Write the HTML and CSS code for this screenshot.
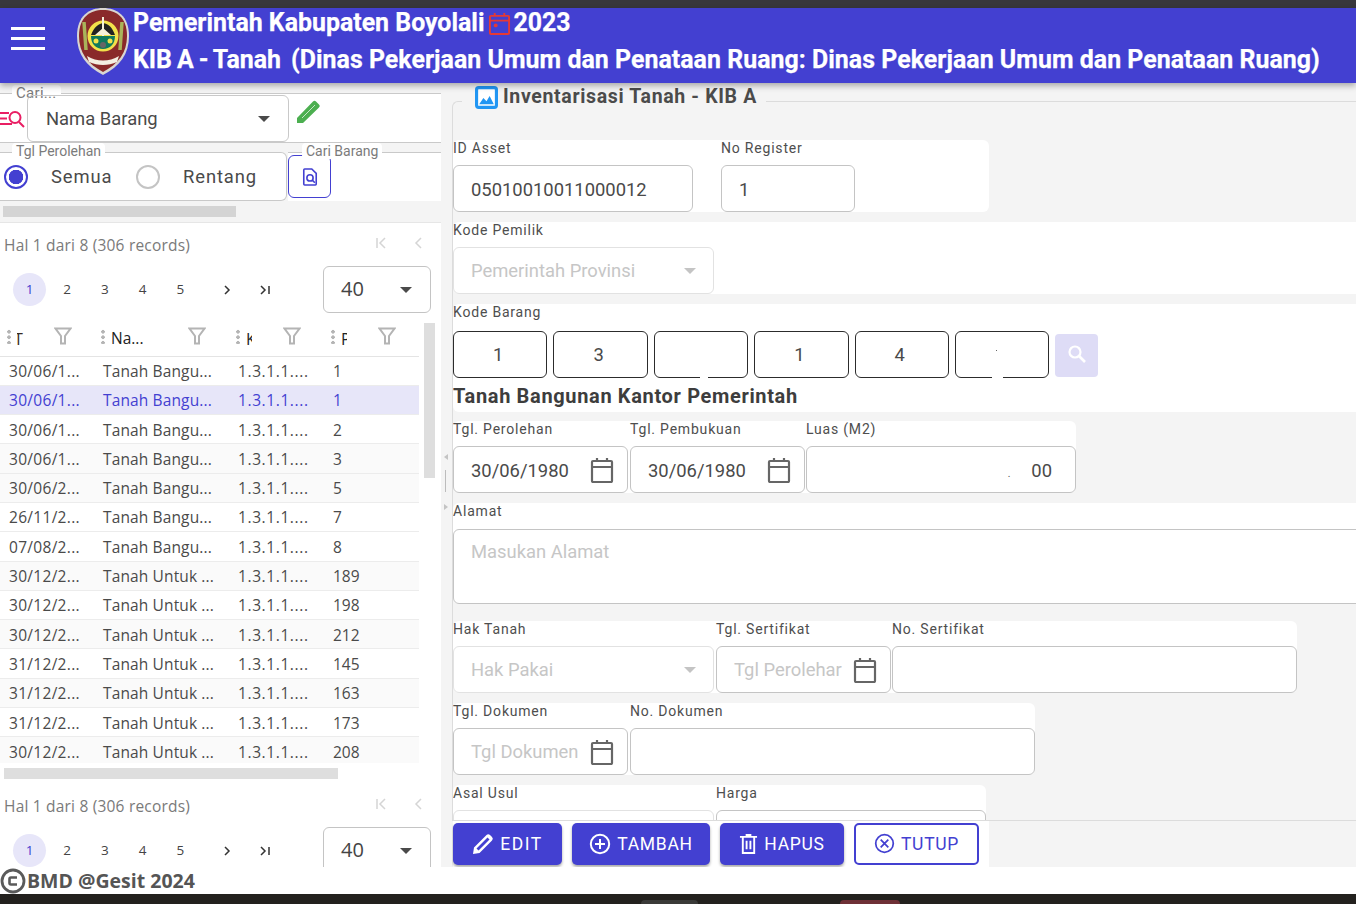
FILE: index.html
```html
<!DOCTYPE html>
<html lang="id">
<head>
<meta charset="utf-8">
<title>KIB A - Tanah</title>
<link rel="stylesheet" href="styles.css">
</head>
<body>
<svg class="defs" width="0" height="0" aria-hidden="true">
  <symbol id="cal" viewBox="0 0 24 26"><path d="M2 5a1 1 0 0 1 1-1h18a1 1 0 0 1 1 1v19a1 1 0 0 1-1 1H3a1 1 0 0 1-1-1zM2 10h20M7 1v3M17 1v3" fill="none" stroke="currentColor" stroke-width="2.200"/></symbol>
  <symbol id="funnel" viewBox="0 0 18 18"><path d="M1.500 1.500h15L11 9v7.500H7V9z" fill="none" stroke="currentColor" stroke-width="2"/></symbol>
</svg>
<div class="topstrip"></div>
<header class="appbar">
  <button class="burger" aria-label="menu"><span></span><span></span><span></span></button>
  <svg class="logo" viewBox="0 0 52 67">
    <path d="M26 0C40 0 52 8 52 28c0 18-9 30-26 39C9 58 0 46 0 28 0 8 12 0 26 0z" fill="#d9d6d2"/>
    <path d="M26 2C39 2 50 9 50 28c0 17-9 28-24 36C11 56 2 45 2 28 2 9 13 2 26 2z" fill="#8a2a2a"/>
    <circle cx="26" cy="29" r="19" fill="#8a2a2a"/>
    <circle cx="26" cy="28" r="15.500" fill="#f2e14a"/>
    <path d="M14 27c3-8 7-11 12-12 6 1 9 4 12 12z" fill="#222"/>
    <path d="M25 9h2v20h-2zM18 27l8-7 8 7z" fill="#f5f1da"/>
    <path d="M14 28h24c0 8-5 13-12 13s-12-5-12-13z" fill="#0f7a5c"/>
    <circle cx="19" cy="33" r="2.500" fill="#f2e14a"/><circle cx="33" cy="33" r="2.500" fill="#f2e14a"/><circle cx="26" cy="37" r="3" fill="#666"/>
    <path d="M10 48c10 6 22 6 32 0l-2 6c-9 4-19 4-28 0z" fill="#f4efe2"/>
    <path d="M7 14l2 28M45 14l-2 28" stroke="#a9b45a" stroke-width="3.500" fill="none"/>
  </svg>
  <div class="appbar-titles">
    <div class="title-line first">Pemerintah Kabupaten Boyolali
      <svg class="cal-red" viewBox="0 0 24 24"><path d="M2 5a1 1 0 0 1 1-1h18a1 1 0 0 1 1 1v17a1 1 0 0 1-1 1H3a1 1 0 0 1-1-1zM2 9h20M7 1v4M17 1v4" fill="none" stroke="#e53935" stroke-width="2"/><circle cx="8" cy="14" r="2" fill="#e53935"/></svg>
      2023</div>
    <div class="title-line second"><span class="title-kib">KIB A - Tanah&nbsp; </span><span class="title-rest">(Dinas Pekerjaan Umum dan Penataan Ruang: Dinas Pekerjaan Umum dan Penataan Ruang)</span></div>
  </div>
</header>

<main class="workspace">
  <aside class="left">
    <div class="left-top">
      <section class="search-row">
        <span class="float-label cari">Cari...</span>
        <svg class="search-ico" viewBox="0 0 25 20"><path d="M0 5h9M0 10.500h7M0 16h12M19 14l5 5" fill="none" stroke="#e91e63" stroke-width="2"/><circle cx="15" cy="9.500" r="5.500" fill="none" stroke="#e91e63" stroke-width="2"/></svg>
        <div class="pick">Nama Barang<i class="caret"></i></div>
        <svg class="pencil" viewBox="0 0 26 26"><path d="M1 20 17 3.500a2 2 0 0 1 3 0l3 3a2 2 0 0 1 0 3L7 25H1z" fill="#4caf50"/><path d="M6 20 19 7" stroke="#c8e6c9" stroke-width="1"/></svg>
      </section>
      <div class="filter-row">
        <section class="date-filter">
          <span class="float-label tgl">Tgl Perolehan</span>
          <span class="radio on"></span><span class="radio-text">Semua</span>
          <span class="radio"></span><span class="radio-text">Rentang</span>
        </section>
        <section class="find-box">
          <span class="float-label barang">Cari Barang</span>
          <button class="find-btn" aria-label="Cari Barang">
            <svg viewBox="0 0 18 20" width="16" height="18"><path d="M2 2a1 1 0 0 1 1-1h8l5 5v12a1 1 0 0 1-1 1H3a1 1 0 0 1-1-1z" fill="none" stroke="#4340d1" stroke-width="1.800"/><circle cx="9" cy="11" r="3.500" fill="none" stroke="#4340d1" stroke-width="1.800"/><path d="m11.500 13.500 3 3" stroke="#4340d1" stroke-width="1.800"/></svg>
          </button>
        </section>
      </div>
      <div class="hscroll top"><span></span></div>
    </div>

    <div class="grid-panel">
      <div class="pager">
        <div class="pager-info"><span>Hal 1 dari 8 (306 records)</span>
          <span class="pager-nav"><svg viewBox="0 0 12 12" width="12" height="12"><path d="M2 1v10M10 1 5 6l5 5" fill="none" stroke="#d5d5d5" stroke-width="1.500"/></svg><svg viewBox="0 0 12 12" width="12" height="12"><path d="M8 1 3 6l5 5" fill="none" stroke="#d5d5d5" stroke-width="1.500"/></svg></span></div>
        <div class="pager-links">
          <b class="page cur">1</b><b class="page">2</b><b class="page">3</b><b class="page">4</b><b class="page">5</b>
          <svg class="pg-next" viewBox="0 0 10 12" width="10" height="12"><path d="m3 2 4 4-4 4" fill="none" stroke="#333" stroke-width="1.500"/></svg>
          <svg class="pg-last" viewBox="0 0 12 12" width="12" height="12"><path d="m2 2 4 4-4 4M10 2v8" fill="none" stroke="#333" stroke-width="1.500"/></svg>
          <div class="size-pick">40<i class="caret"></i></div>
        </div>
      </div>
      <div class="table-wrap">
        <div class="thumb-v"></div>
        <table class="grid">
          <colgroup><col class="c1"><col class="c2"><col class="c3"><col class="c4"></colgroup>
          <thead><tr>
            <th><span class="th-in"><i class="dots"></i><span class="clip clip-t">T</span><svg class="funnel"><use href="#funnel"/></svg></span></th>
            <th><span class="th-in"><i class="dots"></i><span class="th-name">Na...</span><svg class="funnel far"><use href="#funnel"/></svg></span></th>
            <th><span class="th-in"><i class="dots"></i><span class="clip">K</span><svg class="funnel"><use href="#funnel"/></svg></span></th>
            <th><span class="th-in"><i class="dots"></i><span class="clip">P</span><svg class="funnel"><use href="#funnel"/></svg></span></th>
          </tr></thead>
          <tbody>
            <tr><td>30/06/1...</td><td>Tanah Bangu...</td><td>1.3.1.1....</td><td>1</td></tr>
            <tr class="sel"><td>30/06/1...</td><td>Tanah Bangu...</td><td>1.3.1.1....</td><td>1</td></tr>
            <tr><td>30/06/1...</td><td>Tanah Bangu...</td><td>1.3.1.1....</td><td>2</td></tr>
            <tr class="alt"><td>30/06/1...</td><td>Tanah Bangu...</td><td>1.3.1.1....</td><td>3</td></tr>
            <tr class="alt"><td>30/06/2...</td><td>Tanah Bangu...</td><td>1.3.1.1....</td><td>5</td></tr>
            <tr><td>26/11/2...</td><td>Tanah Bangu...</td><td>1.3.1.1....</td><td>7</td></tr>
            <tr><td>07/08/2...</td><td>Tanah Bangu...</td><td>1.3.1.1....</td><td>8</td></tr>
            <tr class="alt"><td>30/12/2...</td><td>Tanah Untuk ...</td><td>1.3.1.1....</td><td>189</td></tr>
            <tr><td>30/12/2...</td><td>Tanah Untuk ...</td><td>1.3.1.1....</td><td>198</td></tr>
            <tr class="alt"><td>30/12/2...</td><td>Tanah Untuk ...</td><td>1.3.1.1....</td><td>212</td></tr>
            <tr><td>31/12/2...</td><td>Tanah Untuk ...</td><td>1.3.1.1....</td><td>145</td></tr>
            <tr class="alt"><td>31/12/2...</td><td>Tanah Untuk ...</td><td>1.3.1.1....</td><td>163</td></tr>
            <tr><td>31/12/2...</td><td>Tanah Untuk ...</td><td>1.3.1.1....</td><td>173</td></tr>
            <tr class="alt"><td>30/12/2...</td><td>Tanah Untuk ...</td><td>1.3.1.1....</td><td>208</td></tr>
          </tbody>
        </table>
      </div>
      <div class="hscroll bottom"><span></span></div>
      <div class="pager pager-low">
        <div class="pager-info"><span>Hal 1 dari 8 (306 records)</span>
          <span class="pager-nav"><svg viewBox="0 0 12 12" width="12" height="12"><path d="M2 1v10M10 1 5 6l5 5" fill="none" stroke="#d5d5d5" stroke-width="1.500"/></svg><svg viewBox="0 0 12 12" width="12" height="12"><path d="M8 1 3 6l5 5" fill="none" stroke="#d5d5d5" stroke-width="1.500"/></svg></span></div>
        <div class="pager-links">
          <b class="page cur">1</b><b class="page">2</b><b class="page">3</b><b class="page">4</b><b class="page">5</b>
          <svg class="pg-next" viewBox="0 0 10 12" width="10" height="12"><path d="m3 2 4 4-4 4" fill="none" stroke="#333" stroke-width="1.500"/></svg>
          <svg class="pg-last" viewBox="0 0 12 12" width="12" height="12"><path d="m2 2 4 4-4 4M10 2v8" fill="none" stroke="#333" stroke-width="1.500"/></svg>
          <div class="size-pick">40<i class="caret"></i></div>
        </div>
      </div>
    </div>
  </aside>

  <div class="splitter">
    <i class="arrow-l"></i><i class="split-bar"></i><i class="arrow-r"></i>
  </div>

  <section class="right">
    <div class="form-frame">
      <h2 class="legend">
        <svg class="legend-ico" viewBox="0 0 22 22"><rect x="1.500" y="1.500" width="19" height="19" rx="2" fill="#fff" stroke="#2196f3" stroke-width="3"/><path d="M4 17.500l4-6 3 3 3-5 4 8z" fill="#2196f3"/></svg>
        Inventarisasi Tanah - KIB A</h2>

      <div class="band w536">
        <div class="field w268"><label>ID Asset</label><div class="box w240">05010010011000012</div></div>
        <div class="field w268"><label>No Register</label><div class="box w134">1</div></div>
      </div>

      <div class="band full">
        <div class="field w261"><label>Kode Pemilik</label><div class="box off w261"><span class="ph">Pemerintah Provinsi</span><i class="caret soft"></i></div></div>
      </div>

      <div class="band full kode-band">
        <div class="field"><label>Kode Barang</label>
          <div class="kode-row">
            <div class="kode">1</div><div class="kode">3</div><div class="kode notch"></div><div class="kode">1</div><div class="kode">4</div><div class="kode notch speck"></div>
            <button class="kode-search" aria-label="cari"><svg viewBox="0 0 20 20" width="20" height="20"><circle cx="8" cy="8" r="5.500" fill="none" stroke="#fff" stroke-width="2.200"/><path d="m12 12 6 6" stroke="#fff" stroke-width="2.600"/></svg></button>
          </div>
        </div>
        <div class="kode-title">Tanah Bangunan Kantor Pemerintah</div>
      </div>

      <div class="band w623">
        <div class="field w177"><label>Tgl. Perolehan</label><div class="box w175 dated">30/06/1980<svg class="cal"><use href="#cal"/></svg></div></div>
        <div class="field w176"><label>Tgl. Pembukuan</label><div class="box w175 dated">30/06/1980<svg class="cal"><use href="#cal"/></svg></div></div>
        <div class="field w270"><label>Luas (M2)</label><div class="box w270 num"><span class="tiny">.</span><span class="zero">00</span></div></div>
      </div>

      <div class="band full alamat">
        <div class="field wide"><label>Alamat</label><div class="box area"><span class="ph">Masukan Alamat</span></div></div>
      </div>

      <div class="band w844">
        <div class="field w263"><label>Hak Tanah</label><div class="box off w261"><span class="ph">Hak Pakai</span><i class="caret soft"></i></div></div>
        <div class="field w176"><label>Tgl. Sertifikat</label><div class="box w175 dated"><span class="ph">Tgl Perolehar</span><svg class="cal"><use href="#cal"/></svg></div></div>
        <div class="field w405"><label>No. Sertifikat</label><div class="box w405"></div></div>
      </div>

      <div class="band w582">
        <div class="field w177"><label>Tgl. Dokumen</label><div class="box w175 dated"><span class="ph">Tgl Dokumen</span><svg class="cal"><use href="#cal"/></svg></div></div>
        <div class="field w405"><label>No. Dokumen</label><div class="box w405"></div></div>
      </div>

      <div class="band w533 last-band">
        <div class="field w263"><label>Asal Usul</label><div class="box off w261"></div></div>
        <div class="field w270"><label>Harga</label><div class="box w270"></div></div>
      </div>
    </div>

    <div class="actions">
      <button class="btn fill w109"><svg viewBox="0 0 22 22" width="22" height="22"><path d="M1 21 2 14.500 14.500 2a2.500 2.500 0 0 1 3.500 0l2 2a2.500 2.500 0 0 1 0 3.500L7.500 20zM4.500 15.500l2 2 11-11-2-2z" fill="#fff" fill-rule="evenodd"/></svg>EDIT</button>
      <button class="btn fill w138"><svg viewBox="0 0 22 22" width="22" height="22"><circle cx="11" cy="11" r="9.200" fill="none" stroke="#fff" stroke-width="2"/><path d="M11 6v10M6 11h10" stroke="#fff" stroke-width="2"/></svg>TAMBAH</button>
      <button class="btn fill w124"><svg viewBox="0 0 20 22" width="19" height="21"><path d="M1 4h18M7 2h6M4 4v17h12V4M8 8v9M12 8v9" fill="none" stroke="#fff" stroke-width="2"/></svg>HAPUS</button>
      <button class="btn line w125"><svg viewBox="0 0 22 22" width="21" height="21"><circle cx="11" cy="11" r="9.200" fill="none" stroke="#4340d1" stroke-width="1.800"/><path d="m7 7 8 8M15 7l-8 8" stroke="#4340d1" stroke-width="1.800"/></svg>TUTUP</button>
    </div>
  </section>
</main>

<footer class="foot">
  <svg class="copy" viewBox="0 0 26 26"><circle cx="13" cy="13" r="11" fill="none" stroke="#5a5a5a" stroke-width="2.800"/><path d="M17 9.500h-6a1.500 1.500 0 0 0-1.500 1.500v4a1.500 1.500 0 0 0 1.500 1.500h6" fill="none" stroke="#5a5a5a" stroke-width="2.600"/></svg>
  <span>BMD @Gesit 2024</span>
</footer>
<div class="desk"><i class="tab a"></i><i class="tab b"></i></div>
</body>
</html>
```

FILE: styles.css
```css
* { box-sizing: border-box; }
html, body { margin: 0; height: 904px; overflow: hidden; }
body {
  display: flex; flex-direction: column; width: 1356px;
  font-family: Roboto, "Liberation Sans", sans-serif; color: #4a4a4a; background: #fff;
}
.defs { position: absolute; }
.topstrip { height: 8px; background: #38373c; flex: none; }

.appbar {
  height: 75px; flex: none; display: flex; background: #4340d1; color: #fff;
  position: relative; z-index: 3; box-shadow: 0 3px 6px rgba(0,0,0,.3);
}
.burger { width: 77px; background: none; border: 0; padding: 19px 0 0 11px; display: flex; flex-direction: column; gap: 7px; }
.burger span { display: block; width: 34px; height: 3px; background: #fff; }
.logo { width: 52px; height: 67px; flex: none; }
.appbar-titles { padding: 0 0 0 4px; }
.title-line { font-weight: 700; font-size: 24.900px; line-height: 37px; white-space: nowrap; -webkit-text-stroke: .25px #fff; }
.title-line.first { display: flex; align-items: center; gap: 3px; height: 30px; margin-bottom: 3px; line-height: 30px; }
.title-line.second { display: block; }
.title-kib { word-spacing: -1.200px; white-space: pre; }
.title-rest { letter-spacing: .04px; }
.cal-red { width: 23px; height: 25px; }

.workspace { flex: 1; min-height: 0; display: flex; background: #f4f4f4; overflow: hidden; }

/* left */
.left { width: 441px; flex: none; display: flex; flex-direction: column; overflow: hidden; }
.left-top { padding-top: 10px; height: 139px; flex: none; }
.search-row {
  height: 50px; position: relative; background: #fff; border-top: 1px solid #c9c9c9; border-bottom: 1px solid #c9c9c9;
  display: flex; align-items: flex-start;
}
.float-label {
  position: absolute; background: #fff; color: #7b7b7b; font-size: 14px; line-height: 16px; padding: 0 4px; border-radius: 4px;
}
.float-label.cari { left: 12px; top: -9px; font-size: 15px; letter-spacing: .3px; }
.float-label.tgl { left: 12px; top: -10px; }
.float-label.barang { left: 14px; top: -10px; }
.search-ico { width: 25px; height: 20px; margin-top: 14px; flex: none; margin-right: 2px; }
.pick {
  width: 262px; height: 47px; margin-top: 1px; border: 1px solid #c9c9c9; border-radius: 6px;
  font-size: 18.400px; line-height: 45px; padding-left: 18px; position: relative;
}
.caret { position: absolute; width: 0; height: 0; border: 6.500px solid transparent; border-top: 6.500px solid #4a4a4a; border-bottom: 0; }
.pick .caret { right: 18px; top: 20px; }
.pencil { width: 26px; height: 26px; margin: 4px 0 0 7px; }
.filter-row { display: flex; margin-top: 9px; height: 49px; }
.date-filter {
  width: 287px; position: relative; background: #fff; border: 1px solid #c9c9c9; border-left: 0;
  border-radius: 0 6px 6px 0; display: flex; align-items: center; padding: 0 0 0 4px;
}
.radio { width: 24px; height: 24px; border: 2px solid #c4c4c4; border-radius: 50%; flex: none; }
.radio.on { border-color: #4340d1; background: radial-gradient(circle, #4340d1 0 7px, #fff 7.500px); }
.radio-text { font-size: 18.400px; letter-spacing: .9px; width: 85px; padding-left: 23px; margin-right: 23px; flex: none; white-space: nowrap; }
.radio-text:last-child { margin: 0; padding-left: 23px; }
.find-box { flex: 1; margin-left: 1px; position: relative; background: #fff; border-top: 1px solid #c9c9c9; }
.find-btn { margin-top: 2px; width: 43px; height: 43px; background: #fff; border: 1px solid #4340d1; border-radius: 6px; padding: 4px 0 0; }
.hscroll { position: relative; flex: none; }
.hscroll.top { height: 21px; padding: 5px 0 0 3px; }
.hscroll.top span { display: block; width: 233px; height: 11px; background: #d4d4d4; }
.hscroll.bottom { height: 21px; padding: 5px 0 0 4px; background: #fff; }
.hscroll.bottom span { display: block; width: 334px; height: 11px; background: #dedede; }

.grid-panel { flex: 1; min-height: 0; background: #fff; border-top: 1px solid #e6e6e6; overflow: hidden; }
.pager { height: 100px; padding: 11px 0 0 4px; }
.pager-info { display: flex; justify-content: space-between; color: #7a7a7a; font-family: "Open Sans", sans-serif; font-size: 15.500px; line-height: 22px; letter-spacing: .2px; padding-right: 16px; }
.pager-nav { display: flex; gap: 26px; padding-top: 3px; }
.pager-links { display: flex; align-items: center; margin-top: 17px; padding-left: 9px; position: relative; }
.pager-low { height: 90px; }
.page { width: 33px; height: 33px; margin-right: 4.700px; border-radius: 50%; font: 400 13.500px/33px "Open Sans", sans-serif; color: #444; text-align: center; flex: none; }
.page.cur { background: #e7e6f9; color: #4340d1; }
.pg-next { margin-left: 21px; }
.pg-last { margin-left: 27px; }
.size-pick {
  position: absolute; left: 319px; top: -7px; width: 108px; height: 47px; border: 1px solid #c4c4c4; border-radius: 6px;
  font: 400 20px/44px "Open Sans", sans-serif; padding-left: 17px; color: #444; background: #fff;
}
.size-pick .caret { right: 18px; top: 20px; }

.table-wrap { height: 440px; position: relative; overflow: hidden; }
.thumb-v { position: absolute; left: 424px; top: 0; width: 11px; height: 155px; background: #dedede; }
.grid { width: 419px; border-collapse: collapse; table-layout: fixed; font-family: "Open Sans", sans-serif; font-size: 15.500px; color: #4a4a4a; }
.c1 { width: 94px; } .c2 { width: 135px; } .c3 { width: 95px; } .c4 { width: 95px; }
.grid th { height: 33px; padding: 0; font-weight: 400; border-bottom: 1px solid #e4e4e4; color: #222; text-align: left; }
.th-in { display: flex; align-items: center; padding-left: 7px; position: relative; height: 32px; }
.dots { width: 4px; height: 15px; background: radial-gradient(circle, #b5b5b5 1.600px, transparent 2px) 0 0 / 4px 5.500px; margin-right: 6px; flex: none; margin-top: -6px; }
.clip { display: inline-block; width: 6px; overflow: hidden; font-size: 16px; line-height: 20px; margin-top: -1px; }
.clip-t { width: 7px; text-indent: -3px; color: #3a2a20; }
.th-name { font-size: 15.500px; margin-top: -2px; }
.funnel { position: absolute; left: 54px; top: 4px; width: 18px; height: 18px; color: #b4b4b4; }
.funnel.far { left: 94px; }
.grid td { height: 29.300px; padding: .6px 0 0 9px; border-bottom: 1px solid #ececec; white-space: nowrap; overflow: hidden; }
.grid td:nth-child(1) { letter-spacing: .3px; }
.grid td:nth-child(2) { letter-spacing: .13px; }
.grid td:nth-child(3) { letter-spacing: .6px; }
.grid tr.alt td { background: #fafafa; }
.grid tr.sel td { background: #e7e6f9; color: #4340d1; }

.splitter { width: 11px; flex: none; position: relative; }
.split-bar { position: absolute; left: 4px; top: 387px; width: 1px; height: 22px; background: #bcbcbc; }
.arrow-l, .arrow-r { position: absolute; border: 3px solid transparent; left: 3px; }
.arrow-l { top: 371px; border-right: 4px solid #c4c4c4; border-left: 0; }
.arrow-r { top: 421px; border-left: 4px solid #c4c4c4; border-right: 0; }

/* right */
.right { flex: 1; min-width: 0; position: relative; overflow: hidden; padding-top: 18px; }
.form-frame { height: 720px; border: 1px solid #dcdcdc; border-right: 0; border-radius: 6px 0 0 0; background: #f4f4f4; padding-top: 38px; overflow: hidden; }
.legend {
  position: absolute; left: 10px; top: 4px; margin: 0; background: #f4f4f4; height: 20px; padding: 0 9px 0 13px;
  font-size: 19.500px; line-height: 20px; font-weight: 700; letter-spacing: .65px; color: #4b4b4b; display: flex; align-items: center; gap: 5px; white-space: nowrap;
}
.legend-ico { width: 23px; height: 23px; }
.band { background: #fff; display: flex; height: 72px; margin-bottom: 10px; border-radius: 6px; }
.band.full { border-radius: 6px 0 0 6px; }
.w536 { width: 536px; } .w623 { width: 623px; } .w844 { width: 844px; } .w582 { width: 582px; } .w533 { width: 533px; }
.kode-band { height: 108px; flex-direction: column; margin-bottom: 9px; }
.kode-band label { height: 27px; }
.band.alamat { height: 101px; margin: 0 0 17px; }
.alamat label { height: 26px; }
.field { flex: none; }
.field.wide { width: 100%; }
.field label { display: block; font-size: 14px; line-height: 17px; letter-spacing: .8px; color: #4e4e4e; }
.field > label { min-height: 25px; }
.w268 { width: 268px; } .w261 { width: 261px; } .w263 { width: 263px; } .w177 { width: 177px; } .w176 { width: 176px; } .w270 { width: 270px; } .w405 { width: 405px; } .w240 { width: 240px; } .w134 { width: 134px; } .w175 { width: 175px; }
.box {
  position: relative; height: 47px; background: #fff; border: 1px solid #c4c4c4; border-radius: 6px;
  font-size: 18.400px; line-height: 46px; padding-left: 17px; white-space: nowrap; color: #4a4a4a;
}
.w623 .box { line-height: 48px; }
.w536 .box { line-height: 47px; }
.box.off { border-color: #e2e2e2; }
.ph { color: #c6c6c6; }
.caret.soft { border-top-color: #c4c4c4; right: 17px; top: 20px; }
.cal { position: absolute; right: 13px; top: 10px; width: 24px; height: 26px; color: #666; }
.dated { overflow: hidden; }
.num { text-align: right; padding-right: 23px; }
.tiny { font-size: 10px; margin-right: 21px; }
.area { height: 75px; width: 1000px; line-height: 44px; }
.kode-row { display: flex; gap: 6px; height: 47px; }
.kode {
  width: 94.400px; height: 47px; border: 1px solid #2c2c2c; border-radius: 6px; text-align: center;
  font-size: 18.400px; line-height: 46px; padding-right: 4px; position: relative; background: #fff;
}
.kode.notch::after { content: ""; position: absolute; left: 45px; bottom: -1px; width: 8px; height: 2px; background: #fff; }
.kode.speck::after { left: 36px; width: 11px; }
.kode.speck::before { content: ""; position: absolute; left: 40px; top: 18px; width: 1px; height: 1px; background: #666; }
.kode-search { width: 43px; height: 43px; margin-top: 3px; background: #dedcf6; border: 0; border-radius: 4px; padding: 0; }
.kode-title { margin-top: 5px; font-size: 20px; font-weight: 700; line-height: 26px; letter-spacing: .65px; color: #3d3d3d; }
.last-band { height: 50px; margin-bottom: 0; }

.actions {
  position: absolute; left: 1px; top: 738px; width: 536px; height: 46px; background: #fff; display: flex; gap: 10px; padding-top: 2px;
}
.btn {
  height: 42px; border-radius: 5px; display: flex; align-items: center; justify-content: center; gap: 6px;
  font: 400 17.500px/1 Roboto, sans-serif; letter-spacing: .7px; padding: 2px 0 0; flex: none;
}
.btn svg { margin-top: -3px; }
.btn.fill { background: #4340d1; color: #fff; border: 0; box-shadow: 0 2px 3px rgba(0,0,0,.35); }
.btn.line { background: #fff; color: #4340d1; border: 2px solid #4340d1; gap: 6px; }
.w109 { width: 109px; letter-spacing: 1.500px; } .w138 { width: 138px; } .w124 { width: 124px; } .w125 { width: 125px; }

.foot { height: 27px; flex: none; background: #fff; display: flex; align-items: center; gap: 1px; font: 700 19.500px/1 "Open Sans", sans-serif; color: #555; position: relative; z-index: 2; }
.copy { width: 26px; height: 26px; flex: none; }
.desk { height: 10px; flex: none; background: #23211e; position: relative; }
.tab { position: absolute; top: 6px; height: 4px; border-radius: 4px 4px 0 0; }
.tab.a { left: 641px; width: 57px; background: #3a3a38; }
.tab.b { left: 840px; width: 60px; background: #6e3036; }
```
